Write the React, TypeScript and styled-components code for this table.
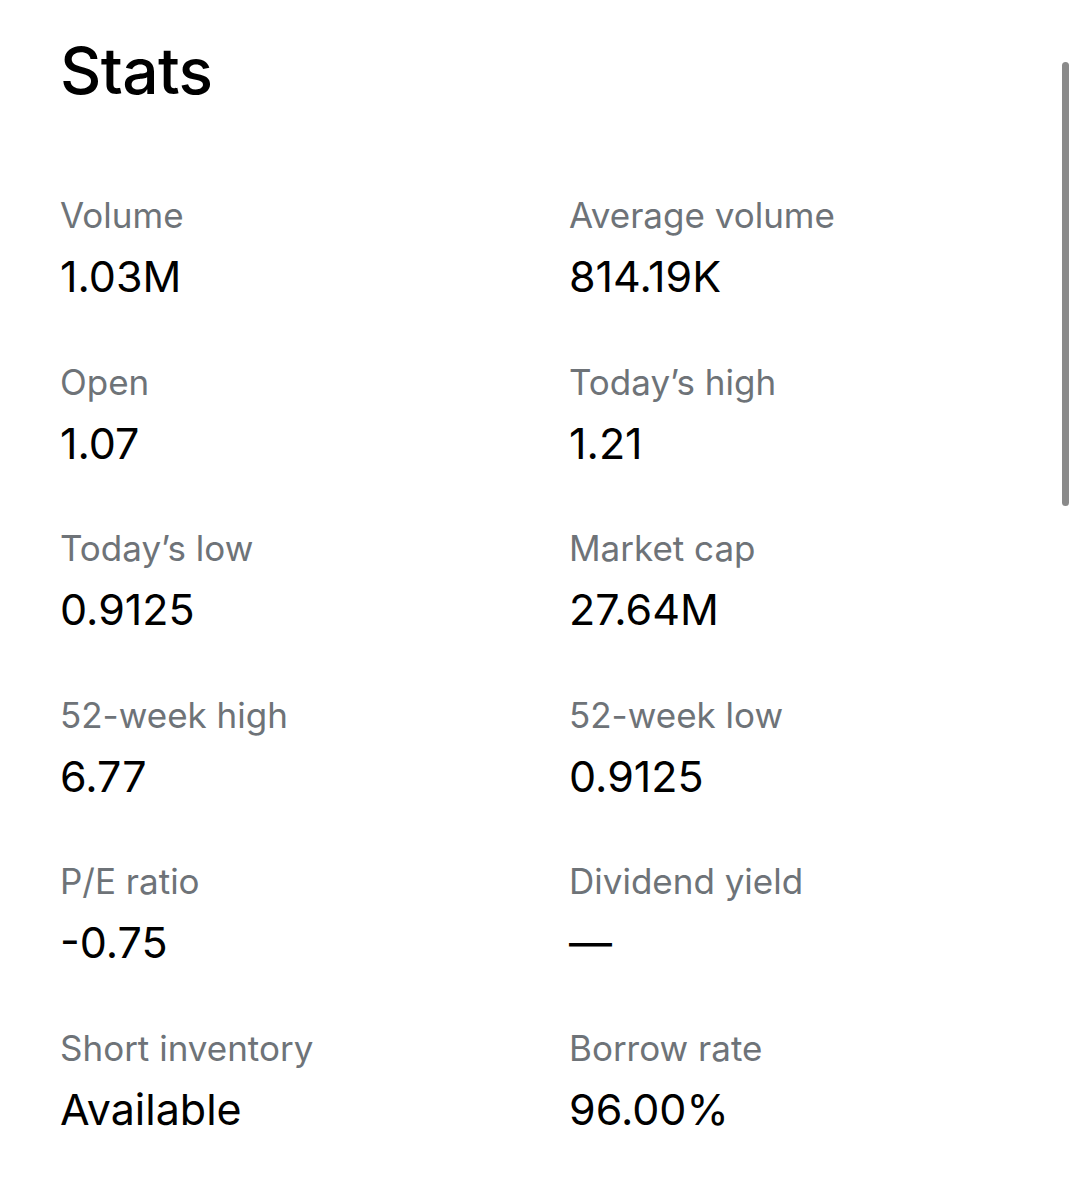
import React from "react";
import styled, { createGlobalStyle } from "styled-components";

const Global = createGlobalStyle`
  html, body { margin: 0; padding: 0; background: #ffffff; }
  body { font-family: Inter, "Noto Sans", sans-serif; -webkit-font-smoothing: antialiased; }
`;

const Page = styled.div`
  position: relative;
  width: 1077px;
  height: 1200px;
  box-sizing: border-box;
  padding: 35px 0 0 60px;
  background: #fff;
  overflow: hidden;
`;

const Title = styled.h1`
  margin: 0;
  font-size: 64px;
  line-height: 72px;
  font-weight: 500;
  color: #000;
  letter-spacing: -0.6px;
`;

const Grid = styled.div`
  display: grid;
  grid-template-columns: 509px 509px;
  margin-top: 88px;
`;

const Cell = styled.div`
  display: flex;
  flex-direction: column;
  height: 166.6px;
`;

const Label = styled.div`
  font-size: 35px;
  line-height: 40px;
  color: #6e7378;
  font-weight: 400;
`;

const Value = styled.div`
  font-size: 43px;
  line-height: 50px;
  margin-top: 16px;
  color: #000;
  font-weight: 400;
`;

const Scrollbar = styled.div`
  position: absolute;
  top: 62px;
  left: 1062px;
  width: 7px;
  height: 444px;
  border-radius: 4px;
  background: #8a8a8a;
`;

const stats: [string, string][] = [
  ["Volume", "1.03M"],
  ["Average volume", "814.19K"],
  ["Open", "1.07"],
  ["Today’s high", "1.21"],
  ["Today’s low", "0.9125"],
  ["Market cap", "27.64M"],
  ["52-week high", "6.77"],
  ["52-week low", "0.9125"],
  ["P/E ratio", "-0.75"],
  ["Dividend yield", "—"],
  ["Short inventory", "Available"],
  ["Borrow rate", "96.00%"],
];

export default function App() {
  return (
    <>
      <Global />
      <Page>
        <Title>Stats</Title>
        <Grid>
          {stats.map(([l, v]) => (
            <Cell key={l}>
              <Label>{l}</Label>
              <Value>{v}</Value>
            </Cell>
          ))}
        </Grid>
        <Scrollbar />
      </Page>
    </>
  );
}
